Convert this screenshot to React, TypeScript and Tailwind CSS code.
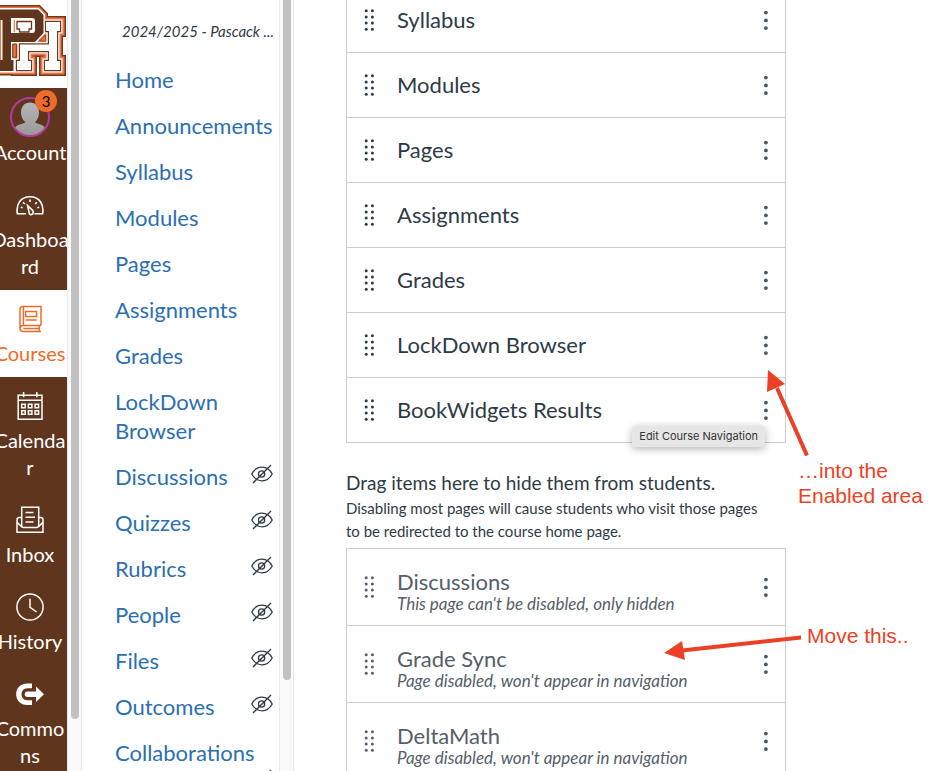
import type { ReactNode } from "react";

type GlobalItem = {
  label: string;
  icon: ReactNode;
  active?: boolean;
};

type CourseLink = {
  label: string;
  hidden?: boolean;
};

type NavRow = {
  label: string;
  note?: string;
};

/* --------------------------
   DATA
-------------------------- */
const globalItems: GlobalItem[] = [
  { label: "Dashboa\nrd", icon: <DashboardIcon /> },
  { label: "Courses", icon: <CoursesIcon />, active: true },
  { label: "Calenda\nr", icon: <CalendarIcon /> },
  { label: "Inbox", icon: <InboxIcon /> },
  { label: "History", icon: <HistoryIcon /> },
  { label: "Commo\nns", icon: <CommonsIcon /> },
];

const courseLinks: CourseLink[] = [
  { label: "Home" },
  { label: "Announcements" },
  { label: "Syllabus" },
  { label: "Modules" },
  { label: "Pages" },
  { label: "Assignments" },
  { label: "Grades" },
  { label: "LockDown Browser" },
  { label: "Discussions", hidden: true },
  { label: "Quizzes", hidden: true },
  { label: "Rubrics", hidden: true },
  { label: "People", hidden: true },
  { label: "Files", hidden: true },
  { label: "Outcomes", hidden: true },
  { label: "Collaborations", hidden: true },
];

const enabledRows: NavRow[] = [
  { label: "Syllabus" },
  { label: "Modules" },
  { label: "Pages" },
  { label: "Assignments" },
  { label: "Grades" },
  { label: "LockDown Browser" },
  { label: "BookWidgets Results" },
];

const disabledRows: NavRow[] = [
  { label: "Discussions", note: "This page can't be disabled, only hidden" },
  { label: "Grade Sync", note: "Page disabled, won't appear in navigation" },
  { label: "DeltaMath", note: "Page disabled, won't appear in navigation" },
];

/* --------------------------
   ICONS
-------------------------- */
const H_PATH =
  "M46 22H60V31H57V61H60V70H45V61H49V51H28V61H31V70H17V61H20V44.5H49V31H46Z";
const P_PATH =
  "M-6 9.5H38L43.5 15V33L35 42H11V60H13.5V71H-6V60H2.5V20H-6Z";

function SchoolLogo() {
  return (
    <svg width="67" height="88" viewBox="0 0 67 88" className="block" aria-hidden="true">
      <g fill="#6b3a1e" stroke="#6b3a1e">
        <path d={H_PATH} strokeWidth="12" />
        <path d={P_PATH} strokeWidth="9" />
      </g>
      <g fill="#ee7440" stroke="#ee7440">
        <path d={H_PATH} strokeWidth="9" />
        <path d={P_PATH} strokeWidth="6" />
      </g>
      <g fill="#fff" stroke="#fff">
        <path d={H_PATH} strokeWidth="5" />
        <path d={P_PATH} strokeWidth="3" />
      </g>
      <path d={H_PATH} fill="#fff" stroke="#6b3a1e" strokeWidth="2.4" />
      <path d={H_PATH} fill="#fff" />
      <path d={P_PATH} fill="#fff" stroke="#fff" strokeWidth="2" />
      <path d={P_PATH} fill="#5f351d" />
      <path d="M12.7 44.2H16.3V57.3H12.7Z" fill="#ee7440" stroke="#6b3a1e" />
      <path d="M11 18H32Q35 18 35 21V30Q35 33 32 33H11Z" fill="#fff" />
      <path d="M14.3 20V32" stroke="#ee7440" strokeWidth="1.2" />
      <path d="M17 21.5H31.5V29H29V32H19.5V29H17Z" fill="#fff" stroke="#6b3a1e" strokeWidth="1.3" />
      <path d="M39.5 41L45.5 35V41Z" fill="#ee7440" stroke="#6b3a1e" strokeWidth=".6" />
      <path d="M0 20V60" stroke="#ee7440" strokeWidth="2" />
    </svg>
  );
}

function DashboardIcon() {
  return (
    <svg width="28" height="28" viewBox="0 0 28 28" fill="none" stroke="currentColor" strokeWidth="1.6">
      <path d="M10 22.8H1.4C-.2 14 4 5.8 14 5.8S28.2 14 26.6 22.8H18.5" />
      <path d="M11.6 14.6L16.8 19.6C18.4 22 15.6 24.8 13.4 22.8Z" />
      <path d="M14 8.5V11M7 11.2L8.8 13M21 11.2L19.2 13M4.8 16.2L6.6 16.8M23.2 16.2L21.4 16.8" />
    </svg>
  );
}

function CoursesIcon() {
  return (
    <svg width="28" height="28" viewBox="0 0 28 28" fill="none" stroke="currentColor" strokeWidth="1.5">
      <path d="M25 20.6V1.4H7C5 1.4 4 2.6 4 4.2V23.6C4 25.4 5 26.4 7 26.4H25" />
      <path d="M7.4 1.6V20.4M4 23.2C4 21.4 5 20.6 7 20.6H25M7.4 23.6H23.6M23.2 20.8V26.2" />
      <path d="M9.6 6.4H20.6V11.6H9.6ZM9.6 15H20.6" />
    </svg>
  );
}

function CalendarIcon() {
  return (
    <svg width="28" height="28" viewBox="0 0 28 28" fill="none" stroke="currentColor" strokeWidth="1.5">
      <path d="M2.2 3.2H26V27.2H2.2ZM2.2 8.2H26M7.6 0V5.2M20.8 0V5.2" />
      <path d="M5.7 12.3H9.2V15.8H5.7ZM12.4 12.3H15.9V15.8H12.4ZM19.1 12.3H22.6V15.8H19.1ZM5.7 18.8H9.2V22.3H5.7ZM12.4 18.8H15.9V22.3H12.4ZM19.1 18.8H22.6V22.3H19.1Z" />
    </svg>
  );
}

function InboxIcon() {
  return (
    <svg width="28" height="28" viewBox="0 0 28 28" fill="none" stroke="currentColor" strokeWidth="1.5">
      <path d="M5.7 21V1.2H22.7V21" />
      <path d="M5.7 11.5H3.2C1.8 11.5 1 12.4 1 14V26.2H27V14C27 12.4 26.2 11.5 24.8 11.5H22.7" />
      <path d="M1 16.5C3.6 18 5 21.4 7.2 21.4H20.8C23 21.4 24.4 18 27 16.5" />
      <path d="M9.5 6.5H17.5M9.5 11.3H19M9.5 16H17.5" />
    </svg>
  );
}

function HistoryIcon() {
  return (
    <svg width="28" height="28" viewBox="0 0 28 28" fill="none" stroke="currentColor" strokeWidth="1.5">
      <circle cx="14" cy="14" r="13.1" />
      <path d="M14 5.8V14.4L20.6 19" />
    </svg>
  );
}

function CommonsIcon() {
  return (
    <svg width="28" height="28" viewBox="0 0 28 28" fill="currentColor">
      <path d="M16 3.5V8.2H11.5C3.5 8.2 3.5 20.2 11.5 20.2H16V25H11.5C-3.5 25-3.8 3.5 11.5 3.5Z" />
      <path d="M11.5 11.5H20V6.5L28 14.2L20 22V17H11.5C7.8 17 7.8 11.5 11.5 11.5Z" />
    </svg>
  );
}

function HiddenIcon() {
  return (
    <svg width="22" height="20" viewBox="0 0 22 20" fill="none" stroke="#2d3b45" strokeWidth="1.3" aria-label="Hidden" role="img">
      <path d="M.8 10C3.2 5.6 7 3.2 11 3.2S18.8 5.6 21.2 10C18.8 14.4 15 16.8 11 16.8S3.2 14.4.8 10Z" />
      <circle cx="10.6" cy="10" r="3.1" />
      <path d="M2 19L20 1" />
    </svg>
  );
}

function GripIcon() {
  return (
    <svg width="10" height="24" viewBox="0 0 10 24" fill="currentColor">
      {[2.7, 8.9, 15.1, 21.3].map((y) => (
        <g key={y}>
          <circle cx="2.2" cy={y} r="1.5" />
          <circle cx="8.4" cy={y} r="1.5" />
        </g>
      ))}
    </svg>
  );
}

function KebabIcon() {
  return (
    <svg width="4" height="20" viewBox="0 0 4 20" fill="currentColor">
      <circle cx="1.9" cy="2.6" r="1.9" />
      <circle cx="1.9" cy="10.4" r="1.9" />
      <circle cx="1.9" cy="18.1" r="1.9" />
    </svg>
  );
}

function Avatar() {
  return (
    <svg width="40" height="40" viewBox="0 0 40 40" aria-hidden="true">
      <defs>
        <linearGradient id="avatar" x1="0" y1="0" x2="0" y2="1">
          <stop offset="0" stopColor="#b5b5b5" />
          <stop offset="1" stopColor="#999" />
        </linearGradient>
      </defs>
      <path
        d="M20 5.5C25.5 5.5 29 9.5 29 15.5C29 20 27.3 23 25 25.2C26 27 33 27 35 30.5C30 38 25 38.5 20 38.5S10 38 5 30.5C7 27 14 27 15.5 25.2C12.8 23 11 20 11 15.5C11 9.5 14.5 5.5 20 5.5Z"
        fill="url(#avatar)"
      />
      <circle cx="20" cy="20" r="19" fill="none" stroke="#b23a9f" strokeWidth="2" />
    </svg>
  );
}

/* --------------------------
   PIECES
-------------------------- */
function Scrollbar({ children }: { children: ReactNode }) {
  return (
    <div className="w-[15px] shrink-0 border-x border-[#e8e8e8] bg-[#fafafa] flex justify-center">
      {children}
    </div>
  );
}

function Row({ row }: { row: NavRow }) {
  return (
    <li
      className={
        row.note
          ? "h-[77px] flex items-center border-b border-[#c7cdd1] px-[17px] text-[#556068]"
          : "h-[65px] flex items-center border-b border-[#c7cdd1] px-[17px] text-[#2d3b45]"
      }
    >
      <button aria-label={`Move ${row.label}`} className="mr-[23px]">
        <GripIcon />
      </button>
      <div className={row.note ? "flex-1 pt-[10px]" : "flex-1"}>
        <div className="text-[22px] leading-[24px]">{row.label}</div>
        {row.note && (
          <div className="text-[17px] leading-[20px] italic">{row.note}</div>
        )}
      </div>
      <button aria-label={`Settings for ${row.label}`} className="text-[#4a565f]">
        <KebabIcon />
      </button>
    </li>
  );
}

export default function App() {
  return (
    <div className="flex h-screen overflow-hidden bg-white font-['Lato',sans-serif]">
      {/* GLOBAL NAV */}
      <nav className="w-[67px] shrink-0 overflow-hidden bg-[#5f351d] text-white">
        <div className="bg-white">
          <SchoolLogo />
        </div>

        <div className="-ml-2 w-[76px] text-[20px] leading-[27px] text-center">
          <a href="#account" className="flex flex-col items-center pt-[9px] pb-[10px]">
            <span className="relative">
              <Avatar />
              <span className="absolute -top-[7px] -right-[7px] size-[22px] rounded-full bg-[#ee6c2a] text-black text-[15px] leading-[22px]">
                3
              </span>
            </span>
            <span className="mt-0.5">Account</span>
          </a>

          {globalItems.map((item) => (
            <a
              key={item.label}
              href="#"
              className={
                item.active
                  ? "flex flex-col items-center pt-[15px] pb-[10px] bg-white text-[#ee6c2a]"
                  : "flex flex-col items-center pt-[15px] pb-[10px]"
              }
            >
              {item.icon}
              <span className="mt-[7px] whitespace-pre">{item.label}</span>
            </a>
          ))}
        </div>
      </nav>

      <Scrollbar>
        <div className="w-2 h-[93.25%] rounded-b-full bg-[#c1c1c1]" />
      </Scrollbar>

      {/* COURSE NAV */}
      <nav className="w-[197px] shrink-0 overflow-hidden pl-[33px] pr-1.5 pt-5">
        <p className="pl-[7px] -mr-1.5 text-[15px] leading-[22px] italic text-[#2d3b45] whitespace-nowrap">
          2024/2025 - Pascack ...
        </p>
        <ul className="mt-[23px] text-[22px] leading-[29px] text-[#2b6fb3]">
          {courseLinks.map((link) => (
            <li key={link.label} className="mb-[17px] flex flex-wrap items-start justify-between">
              <a href="#">{link.label}</a>
              {link.hidden && (
                <span className="ml-auto pt-0.5">
                  <HiddenIcon />
                </span>
              )}
            </li>
          ))}
        </ul>
      </nav>

      <Scrollbar>
        <div className="w-2 h-[88.2%] rounded-b-full bg-[#c1c1c1]" />
      </Scrollbar>

      {/* NAVIGATION SETTINGS */}
      <main className="relative flex-1 overflow-hidden pl-[52px]">
        <div className="max-w-[440px]">
          <div className="relative -mt-3">
            <ul className="border-x border-[#c7cdd1]">
              {enabledRows.map((row) => (
                <Row key={row.label} row={row} />
              ))}
            </ul>
            <div
              role="tooltip"
              className="absolute right-[21px] -bottom-1 rounded-sm bg-[#e6e6e6] px-[7px] font-['Inter',sans-serif] text-[11px] leading-[21px] text-[#333] shadow-[0_2px_8px_rgba(0,0,0,0.3)]"
            >
              Edit Course Navigation
            </div>
          </div>

          <div className="mt-[26px] mb-[5px] text-[#2d3b45]">
            <p className="text-[19px] leading-[28px]">
              Drag items here to hide them from students.
            </p>
            <p className="pr-3 text-[15px] leading-[23px]">
              Disabling most pages will cause students who visit those pages to
              be redirected to the course home page.
            </p>
          </div>

          <ul className="border-x border-t border-[#c7cdd1]">
            {disabledRows.map((row) => (
              <Row key={row.label} row={row} />
            ))}
          </ul>
        </div>

        {/* CALLOUTS */}
        <div className="absolute inset-0 pointer-events-none font-['Liberation_Sans',sans-serif] text-[21px] leading-[25px] text-[#ec3f25]">
          <svg width="150" height="300" viewBox="0 0 150 300" className="absolute left-[370px] top-[368px]">
            <path d="M113 20L143 87.5" stroke="currentColor" strokeWidth="4" />
            <path d="M104 2L121 16L103 24Z" fill="currentColor" />
            <path d="M18 282.5L137 269.5" stroke="currentColor" strokeWidth="4" />
            <path d="M0 285L18 273L21 292Z" fill="currentColor" />
          </svg>
          <p className="absolute left-[504px] top-[458px] whitespace-nowrap">
            …into the
            <br />
            Enabled area
          </p>
          <p className="absolute left-[513px] top-[623px] whitespace-nowrap">
            Move this..
          </p>
        </div>
      </main>
    </div>
  );
}
